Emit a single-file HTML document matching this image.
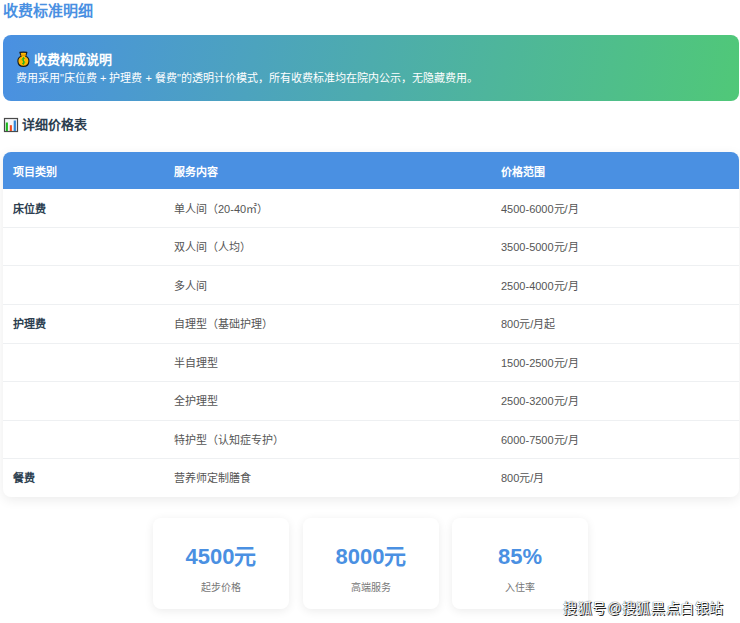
<!DOCTYPE html>
<html lang="zh-CN"><head><meta charset="utf-8">
<style>
html,body{margin:0;padding:0;background:#fff;width:740px;height:623px;overflow:hidden;}
body{font-family:"Liberation Sans",sans-serif;color:#2c3e50;position:relative;}
.abs{position:absolute;white-space:nowrap;}
.title{left:3px;top:0px;font-size:15px;font-weight:bold;color:#4a90e2;line-height:22px;}
.banner{left:3px;top:35px;width:736px;height:65.5px;border-radius:8px;background:linear-gradient(100deg,#4a90e2 0%,#50c878 100%);}
.btitle{left:34px;top:51px;font-size:13px;font-weight:bold;color:#fff;line-height:18px;}
.bdesc{left:16px;top:70px;font-size:11px;color:#fff;line-height:16px;}
.sub{left:22px;top:116px;font-size:13px;font-weight:bold;color:#2c3e50;line-height:18px;}
.table{left:3px;top:152px;width:736px;height:345px;border-radius:8px;overflow:hidden;background:#fff;box-shadow:0 3px 12px rgba(0,0,0,0.08);}
.thead{position:absolute;left:0;top:0;width:736px;height:37px;background:#4a90e2;}
.th{position:absolute;top:1.5px;line-height:37px;font-size:11px;font-weight:bold;color:#fff;white-space:nowrap;}
.row{position:absolute;left:0;width:736px;height:38.5px;}
.ln{position:absolute;left:0;width:736px;height:1px;background:#eef0f2;}
.td{position:absolute;top:2px;line-height:37.5px;font-size:11px;color:#555;white-space:nowrap;}
.td.b{font-weight:bold;color:#2c3e50;top:2px;}
.c1{left:10px;} .c2{left:171px;} .c3{left:498px;}
.card{top:518px;width:136px;height:91px;border-radius:8px;background:#fff;box-shadow:0 2px 10px rgba(0,0,0,0.08);}
.num{position:absolute;left:0;width:100%;text-align:center;top:25px;font-size:22px;font-weight:bold;color:#4a90e2;line-height:28px;}
.lab{position:absolute;left:0;width:100%;text-align:center;top:63px;font-size:10px;color:#777;line-height:14px;}
.wm{left:563px;top:598px;font-size:14px;letter-spacing:0.6px;font-weight:normal;color:#fff;text-shadow:1px 1px 0 #222,0 0 1px #000;line-height:20px;}
</style></head>
<body>
<div class="abs title">收费标准明细</div>
<div class="abs banner"></div>
<svg class="abs" style="left:14px;top:50px" width="20" height="18" viewBox="0 0 20 18"><path d="M5.9 2.4 Q9.4 1.9 12.9 2.4 L11.7 6.3 C14.3 7.4 15 9.6 14.9 11.4 C14.7 14.6 12.3 16.4 9.4 16.4 C6.5 16.4 4.1 14.6 3.9 11.4 C3.8 9.6 4.5 7.4 7.1 6.3 Z" fill="#ffb800" stroke="#1a1a1a" stroke-width="1.1" stroke-linejoin="round"/><path d="M6.6 5.2 L12.2 5.2" stroke="#d08a00" stroke-width="0.9"/><path d="M10.7 8.6 C10.2 7.9 8.2 7.9 8.2 9.5 C8.2 11 10.7 10.7 10.7 12.4 C10.7 13.9 8.6 14 8 13.2 M9.4 7.1 L9.4 14.7" fill="none" stroke="#22b422" stroke-width="1"/></svg><div class="abs btitle">收费构成说明</div>
<div class="abs bdesc">费用采用"床位费 + 护理费 + 餐费"的透明计价模式，所有收费标准均在院内公示，无隐藏费用。</div>
<svg class="abs" style="left:3px;top:117px" width="16" height="16" viewBox="0 0 16 16"><rect x="1.5" y="1.5" width="13" height="13" fill="#f4f6f8" stroke="#4a4a4a" stroke-width="1.2"/><rect x="2.8" y="5.5" width="2.1" height="8.5" fill="#1cb81c"/><rect x="6.8" y="8.2" width="2.1" height="5.8" fill="#f04a1e"/><rect x="10.7" y="3.5" width="2.2" height="10.5" fill="#2f86d8"/></svg><div class="abs sub">详细价格表</div>
<div class="abs table">
  <div class="thead">
    <div class="th c1">项目类别</div>
    <div class="th c2">服务内容</div>
    <div class="th c3">价格范围</div>
  </div>
  <div class="ln" style="top:75px"></div>
  <div class="ln" style="top:113px"></div>
  <div class="ln" style="top:152px"></div>
  <div class="ln" style="top:191px"></div>
  <div class="ln" style="top:229px"></div>
  <div class="ln" style="top:268px"></div>
  <div class="ln" style="top:306px"></div>
  <div class="row" style="top:37.00px"><div class="td b c1">床位费</div><div class="td c2">单人间（20-40㎡）</div><div class="td c3">4500-6000元/月</div></div>
  <div class="row" style="top:75.42px"><div class="td c2">双人间（人均）</div><div class="td c3">3500-5000元/月</div></div>
  <div class="row" style="top:113.84px"><div class="td c2">多人间</div><div class="td c3">2500-4000元/月</div></div>
  <div class="row" style="top:152.26px"><div class="td b c1">护理费</div><div class="td c2">自理型（基础护理）</div><div class="td c3">800元/月起</div></div>
  <div class="row" style="top:190.68px"><div class="td c2">半自理型</div><div class="td c3">1500-2500元/月</div></div>
  <div class="row" style="top:229.10px"><div class="td c2">全护理型</div><div class="td c3">2500-3200元/月</div></div>
  <div class="row" style="top:267.52px"><div class="td c2">特护型（认知症专护）</div><div class="td c3">6000-7500元/月</div></div>
  <div class="row" style="top:305.94px"><div class="td b c1">餐费</div><div class="td c2">营养师定制膳食</div><div class="td c3">800元/月</div></div>
</div>
<div class="abs card" style="left:153px"><div class="num">4500元</div><div class="lab">起步价格</div></div>
<div class="abs card" style="left:303px"><div class="num">8000元</div><div class="lab">高端服务</div></div>
<div class="abs card" style="left:452px"><div class="num">85%</div><div class="lab">入住率</div></div>
<div class="abs wm">搜狐号<span style="display:inline-block;width:15px;text-align:center;letter-spacing:0">@</span>搜狐黑点白银站</div>
</body></html>
